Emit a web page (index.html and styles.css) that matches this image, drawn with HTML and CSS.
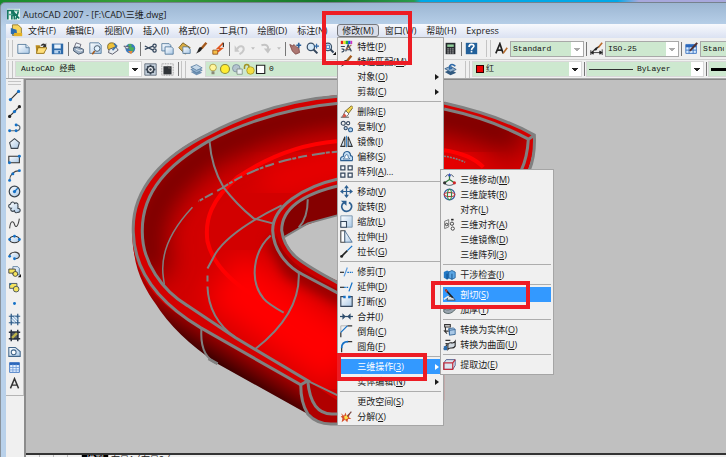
FILE: index.html
```html
<!DOCTYPE html>
<html lang="zh-CN">
<head>
<meta charset="utf-8">
<title>AutoCAD 2007</title>
<link rel="stylesheet" href="styles.css">
</head>
<body>
<svg class="defs" aria-hidden="true">
  <defs>
    <linearGradient id="sheet" x1="0" y1="0" x2="1" y2="1"><stop offset="0" stop-color="#fff"/><stop offset="1" stop-color="#a9c8e6"/></linearGradient>
    <symbol id="new" viewBox="0 0 16 16"><path d="M1 3h10l4 4v7H1z" fill="url(#sheet)" stroke="#4b7296"/><path d="M11 3v4h4" fill="#dceaf6" stroke="#4b7296"/></symbol>
    <symbol id="open" viewBox="0 0 16 16"><path d="M2 4h5l1 2h5v8H3z" fill="#b98a1c"/><path d="M5 7h11l-4 7H3z" fill="#ffdf7a" stroke="#8c6a14"/><path d="M8 5c1-3 4-4 6-2l1-2v5h-4l1-2" fill="#333"/></symbol>
    <symbol id="save" viewBox="0 0 16 16"><path d="M1 2h14v13H1z" fill="#2d69a8"/><path d="M4 3h8v5H4z" fill="#e8f3fc"/><path d="M4 10h8v4H4z" fill="#b7d3ee"/><path d="M9 11h2v3H9z" fill="#2d69a8"/></symbol>
    <symbol id="print" viewBox="0 0 16 16"><path d="M5 1l6 2-2 5-6-2z" fill="#eef4fa" stroke="#556"/><path d="M2 7l5-1 7 3v4l-6 2-6-4z" fill="#9eb0c4" stroke="#34465c"/><path d="M5 9l5 2 3-1" fill="none" stroke="#fff"/></symbol>
    <symbol id="preview" viewBox="0 0 16 16"><path d="M1 1h11l3 3v10H1z" fill="url(#sheet)" stroke="#4b7296"/><circle cx="10" cy="8" r="3.5" fill="#e2f2ff" stroke="#345"/><path d="M7 11l-3 4" stroke="#a4591c" stroke-width="2"/></symbol>
    <symbol id="publish" viewBox="0 0 16 16"><circle cx="7" cy="6" r="5" fill="#efc23a" stroke="#6b5a22"/><path d="M4 9l8-3 3 4-7 5-5-2z" fill="#e8edf2" stroke="#445"/><path d="M10 2l3 3-5 5" fill="none" stroke="#3f72a5" stroke-width="2"/></symbol>
    <symbol id="globe" viewBox="0 0 16 16"><circle cx="9" cy="8" r="6" fill="#3979bf"/><path d="M7 2l4 1-1 3 4 1-2 5-3-2-3-3z" fill="#4bb05a"/><path d="M1 5l7 1-3 3z" fill="#d8dde6" stroke="#556"/><path d="M6 11l4 4 2-4z" fill="#e9893b"/></symbol>
    <symbol id="cut" viewBox="0 0 16 16"><path d="M1 5l10 5M1 9l10-4" stroke="#34465c" stroke-width="1.5"/><circle cx="13" cy="4.500" r="2" fill="none" stroke="#34465c" stroke-width="1.500"/><circle cx="13" cy="10.500" r="2" fill="none" stroke="#34465c" stroke-width="1.500"/></symbol>
    <symbol id="copy" viewBox="0 0 16 16"><path d="M1 2h9l2 2v7H1z" fill="url(#sheet)" stroke="#4b7296"/><path d="M5 6h8l2 2v7H5z" fill="url(#sheet)" stroke="#4b7296"/></symbol>
    <symbol id="paste" viewBox="0 0 16 16"><path d="M1 7l5-6 9 6-6 8z" fill="#d9ad45" stroke="#705514"/><path d="M6 6h6l3 3v5H6z" fill="url(#sheet)" stroke="#4b7296"/></symbol>
    <symbol id="brush" viewBox="0 0 16 16"><path d="M14 1l-6 7" stroke="#a4591c" stroke-width="3"/><path d="M9 7c-1 5-5 6-8 7 3-2 2-5 5-8z" fill="#222"/></symbol>
    <symbol id="editor" viewBox="0 0 16 16"><path d="M1 10h6v5H1z" fill="#f6c04a" stroke="#8a4a10"/><path d="M14 1L7 8h5l-5 4" fill="none" stroke="#e2571e" stroke-width="2"/><path d="M14 1v5" stroke="#333" stroke-width="1.500"/></symbol>
    <symbol id="undo" viewBox="0 0 16 16"><path d="M5 9c3-6 9-4 8 1-1 3-3 4-5 5" fill="none" stroke="#c8c8c8" stroke-width="2.500"/><path d="M2 4v8h6z" fill="#c8c8c8"/></symbol>
    <symbol id="redo" viewBox="0 0 16 16"><path d="M3 4c7-2 9 2 8 5" fill="none" stroke="#c4c4c4" stroke-width="2.500"/><path d="M6 8h9l-4 6z" fill="#c4c4c4"/></symbol>
    <symbol id="tiny" viewBox="0 0 6 16"><path d="M0 6h6l-3 4z" fill="#c0c0c0"/></symbol>
    <symbol id="pan" viewBox="0 0 16 16"><path d="M1 3l4 2 1-2 3 3 3 1 1 6-5 2-4-4z" fill="#ad7772" stroke="#7c4844"/><path d="M12 1v6M9 4h6" stroke="#285f99" stroke-width="2"/></symbol>
    <symbol id="zoomin" viewBox="0 0 16 16"><circle cx="6" cy="6" r="4.500" fill="#d7ebfa" stroke="#3a5068" stroke-width="1.500"/><path d="M9 9l5 5" stroke="#34465c" stroke-width="2.500"/><path d="M13 2v6M10 5h6" stroke="#2d69a8" stroke-width="1.500"/></symbol>
    <symbol id="zoomwin" viewBox="0 0 16 16"><circle cx="6" cy="6" r="4.500" fill="#d7ebfa" stroke="#3a5068" stroke-width="1.500"/><path d="M9 9l4 4" stroke="#34465c" stroke-width="2.500"/><path d="M4 4h4v4H4z" fill="none" stroke="#2d69a8"/><path d="M12 16l4-4v4z" fill="#111"/></symbol>
    <symbol id="calc" viewBox="0 0 16 16"><path d="M2 1h12v14H2z" fill="#25282c"/><path d="M4 3h8v3H4z" fill="#91cf9b"/><path d="M4 8.500h8M4 11h8M4 13.500h8" stroke="#ddd" stroke-dasharray="2 1"/></symbol>
    <symbol id="help" viewBox="0 0 16 16"><path d="M1 1h14v14H1z" fill="#22609a"/><path d="M5 6c0-4 6-4 6-1 0 2-3 2-3 5M8 11v2" stroke="#fff" stroke-width="2" fill="none"/></symbol>
    <symbol id="tstyle" viewBox="0 0 16 16"><path d="M1 14L6 2l4 12M3 10h6" fill="none" stroke="#222" stroke-width="2"/><path d="M15 7l-5 7" stroke="#b86b29" stroke-width="2"/></symbol>
    <symbol id="dstyle" viewBox="0 0 16 16"><path d="M1 10v6M15 9v7M1 13h14M1 13l3-2v4zM15 13l-3-2v4z" fill="#222" stroke="#222"/><path d="M15 1l-5 6" stroke="#b86b29" stroke-width="2"/><path d="M11 5l-3 5-5 1 4-4z" fill="#222"/></symbol>
    <symbol id="tbstyle" viewBox="0 0 16 16"><path d="M1 3h13v11H1z" fill="#d9ecff" stroke="#2b67bb"/><path d="M1 5h13" stroke="#2b67bb" stroke-width="3"/><path d="M1 10h13M5 3v11M10 3v11" stroke="#2b67bb"/><path d="M15 1L6 11" stroke="#533" stroke-width="2.500"/></symbol>
    <symbol id="gear" viewBox="0 0 16 16"><path d="M1 1h14v14H1z" fill="#c7d3df" stroke="#52606f"/><circle cx="8" cy="8" r="4" fill="#fff" stroke="#3a4654" stroke-width="2"/><circle cx="8" cy="8" r="1.500" fill="#3a4654"/><path d="M8 2v2M8 12v2M2 8h2M12 8h2M4 4l1 1M11 11l1 1M4 12l1-1M11 5l1-1" stroke="#3a4654" stroke-width="2"/></symbol>
    <symbol id="mine" viewBox="0 0 16 16"><path d="M1 1h14v14H1z" fill="none" stroke="#777" stroke-dasharray="1 1"/><path d="M3 4h10v10H3z" fill="#303438"/><path d="M8 3l5 4h-4z" fill="#555"/></symbol>
    <symbol id="layers" viewBox="0 0 16 16"><path d="M1 11l7 4 7-3-7-4z" fill="#6f91b3"/><path d="M1 8l7 4 7-3-7-4z" fill="#93b2cf" stroke="#587ca0"/><path d="M1 5l7 4 7-3-7-4z" fill="#c6d9ea" stroke="#587ca0"/></symbol>
    <symbol id="lprev" viewBox="0 0 16 16"><path d="M1 11l7 4 7-3-7-4z" fill="#31597f"/><path d="M1 7l7 4 7-3-7-4z" fill="#93b2cf" stroke="#31597f"/><path d="M14 4c-4-4-8-2-7 3l3-1" fill="none" stroke="#2d69a8" stroke-width="2"/></symbol>
    <symbol id="bulb" viewBox="0 0 16 16"><circle cx="8" cy="6" r="4.500" fill="#fff59b" stroke="#a19136"/><path d="M6 11h4v4H6z" fill="#8a8a78"/></symbol>
    <symbol id="sun" viewBox="0 0 16 16"><circle cx="8" cy="8" r="6" fill="#ffed31" stroke="#8f8c38" stroke-width="1.500"/></symbol>
    <symbol id="vp" viewBox="0 0 16 16"><circle cx="7" cy="7" r="5" fill="#b4c4cf" stroke="#76879a"/><path d="M8 8h7v7H8z" fill="#e9f1f4" stroke="#76877a"/></symbol>
    <symbol id="lock" viewBox="0 0 16 16"><path d="M2 8V5c0-4 6-4 6 0v3" fill="none" stroke="#a09325" stroke-width="2"/><circle cx="10" cy="10" r="5" fill="#f5df43" stroke="#a09325"/></symbol>
    <symbol id="white" viewBox="0 0 16 16"><path d="M2 3h11v11H2z" fill="#fff" stroke="#222" stroke-width="1.500"/></symbol>
    <symbol id="line" viewBox="0 0 16 16"><path d="M3 13L13 3" stroke="#333" stroke-width="1.500"/><circle cx="3" cy="13" r="2" fill="#1471c7"/><circle cx="13" cy="3" r="2" fill="#1471c7"/></symbol>
    <symbol id="xline" viewBox="0 0 16 16"><path d="M1 15L15 1" stroke="#333" stroke-width="1.500"/><circle cx="2" cy="14" r="2" fill="#222"/><circle cx="14" cy="2" r="2" fill="#222"/><circle cx="8" cy="8" r="2" fill="#1471c7"/></symbol>
    <symbol id="pline" viewBox="0 0 16 16"><path d="M2 12h8c6 0 6-7 1-7" fill="none" stroke="#5b6873" stroke-width="1.500"/><circle cx="2" cy="12" r="1.800" fill="#1471c7"/><circle cx="10" cy="12" r="1.800" fill="#1471c7"/><circle cx="10" cy="5" r="1.800" fill="#1471c7"/></symbol>
    <symbol id="poly" viewBox="0 0 16 16"><path d="M8 2l6 5-2 7H4L2 7z" fill="url(#sheet)" stroke="#3c4650" stroke-width="1.300"/></symbol>
    <symbol id="rect" viewBox="0 0 16 16"><path d="M1 4h13v8H1z" fill="url(#sheet)" stroke="#333" stroke-width="1.300"/><circle cx="1.800" cy="12" r="1.800" fill="#1471c7"/><circle cx="14" cy="4" r="1.800" fill="#1471c7"/></symbol>
    <symbol id="arc" viewBox="0 0 16 16"><path d="M2 14C2 7 7 2 14 2" fill="none" stroke="#444" stroke-width="1.300"/><circle cx="2" cy="14" r="1.800" fill="#1471c7"/><circle cx="6" cy="6" r="1.800" fill="#1471c7"/><circle cx="14" cy="2" r="1.800" fill="#1471c7"/></symbol>
    <symbol id="circle" viewBox="0 0 16 16"><circle cx="8" cy="8" r="6.500" fill="url(#sheet)" stroke="#3c4650" stroke-width="1.500"/><path d="M8 8l4-4" stroke="#1471c7" stroke-width="1.500"/><circle cx="8" cy="8" r="2" fill="#1471c7"/></symbol>
    <symbol id="cloud" viewBox="0 0 16 16"><path d="M4 2c2-2 4 0 4 1 3-2 5 1 4 3 1 1 0 2 0 3 4 0 4 5 0 5-2 1-4 0-4-2-3 2-6-1-4-3-4 0-4-5-1-5z" fill="url(#sheet)" stroke="#3c4650" stroke-width="1.300"/></symbol>
    <symbol id="spline" viewBox="0 0 16 16"><path d="M2 14C3 3 7 5 8 9s4 5 6-7" fill="none" stroke="#444" stroke-width="1.300"/></symbol>
    <symbol id="ellipse" viewBox="0 0 16 16"><ellipse cx="8" cy="8" rx="6" ry="4" fill="url(#sheet)" stroke="#333" stroke-width="1.500"/><circle cx="2" cy="8" r="1.700" fill="#1471c7"/><circle cx="14" cy="8" r="1.700" fill="#1471c7"/><circle cx="8" cy="4" r="1.700" fill="#1471c7"/></symbol>
    <symbol id="earc" viewBox="0 0 16 16"><path d="M2 9C1 3 14 2 14 8c0 2-2 4-5 4" fill="url(#sheet)" stroke="#444" stroke-width="1.500"/><circle cx="2" cy="9" r="1.700" fill="#1471c7"/><circle cx="8" cy="12" r="1.700" fill="#1471c7"/></symbol>
    <symbol id="block" viewBox="0 0 16 16"><path d="M6 2h6l2 2v8H6z" fill="url(#sheet)" stroke="#4b7296"/><path d="M1 5h8v5H1z" fill="#f4e35f" stroke="#333"/><circle cx="9" cy="11" r="3" fill="#f4e35f" stroke="#333"/><path d="M12 15l4-4v4z" fill="#111"/></symbol>
    <symbol id="mkblock" viewBox="0 0 16 16"><path d="M2 3h9v6H2z" fill="#f4e35f" stroke="#34465c"/><circle cx="10" cy="10" r="3.500" fill="#f4e35f" stroke="#34465c"/><path d="M2 3h2v2H2z" fill="#1471c7"/></symbol>
    <symbol id="point" viewBox="0 0 16 16"><circle cx="8" cy="8" r="1.800" fill="#1471c7"/></symbol>
    <symbol id="hatch" viewBox="0 0 16 16"><path d="M3 3h10v10H3z" fill="#a9c6e1"/><path d="M4 1v14M12 1v14M1 4h14M1 12h14" stroke="#2f5b86" stroke-width="1.500"/><path d="M4 8l4 4M5 5l6 6M8 4l4 4" stroke="#fff"/></symbol>
    <symbol id="grad" viewBox="0 0 16 16"><path d="M3 3h10v10H3z" fill="#52575c"/><path d="M4 1v14M12 1v14M1 4h14M1 12h14" stroke="#28313f" stroke-width="1.800"/><path d="M5 11l6-6" stroke="#bdb24a" stroke-width="3"/></symbol>
    <symbol id="region" viewBox="0 0 16 16"><path d="M1 3h8l6 5v6H1z" fill="url(#sheet)" stroke="#42668a" stroke-width="1.300"/><circle cx="7" cy="9" r="3" fill="#fff" stroke="#42668a" stroke-width="1.300"/></symbol>
    <symbol id="table" viewBox="0 0 16 16"><path d="M2 2h12v12H2z" fill="#e6f1ff" stroke="#2b67bb"/><path d="M2 3.500h12" stroke="#2b67bb" stroke-width="3"/><path d="M2 8h12M2 11h12M6 4v10M10 4v10" stroke="#6c9bd9"/></symbol>
    <symbol id="mtext" viewBox="0 0 16 16"><path d="M3 14L8 2l5 12M5 10h6" fill="none" stroke="#333" stroke-width="1.800"/></symbol>
    <symbol id="props" viewBox="0 0 16 16"><path d="M1 1h3v4H1z" fill="#e02020"/><path d="M4 1h3v4H4z" fill="#f0e020"/><path d="M7 1h3v4H7z" fill="#20b040"/><path d="M10 1h3v4h-3z" fill="#2050e0"/><path d="M13 1h2v4h-2z" fill="#d030c0"/><path d="M1 8h5M2 11c4 0 4 3 0 4M7 14l3-8 4 8M8 12h5" stroke="#34465c" stroke-width="1.500" fill="none"/><path d="M14 6l-7 6" stroke="#a06a50" stroke-width="1.500"/></symbol>
    <symbol id="erase" viewBox="0 0 16 16"><path d="M1 15h10" stroke="#333"/><path d="M14 1l2 2-6 8-4-3z" fill="#f3d750" stroke="#6b5a22"/><path d="M7 7l4 4-3 3-5 0z" fill="#fff" stroke="#555"/><path d="M5 10l3 3-2 2H3z" fill="#d55a4a"/></symbol>
    <symbol id="copies" viewBox="0 0 16 16"><circle cx="4" cy="4" r="2.500" fill="#eee" stroke="#34465c" stroke-width="1.300"/><circle cx="10" cy="4" r="2" fill="#fff" stroke="#34465c" stroke-width="1.300"/><circle cx="7" cy="10" r="2" fill="#b7d3ee" stroke="#34465c" stroke-width="1.300"/><circle cx="13" cy="12" r="2.500" fill="#b7d3ee" stroke="#2d5f91" stroke-width="1.300"/></symbol>
    <symbol id="mirror" viewBox="0 0 16 16"><path d="M6 2v12H1zM10 2v12h5z" fill="url(#sheet)" stroke="#333" stroke-width="1.300"/><path d="M8 1v14" stroke="#1471c7"/></symbol>
    <symbol id="offset" viewBox="0 0 16 16"><path d="M1 13c-1-4 1-5 3-5 0-8 9-8 9-1 3 0 3 4 2 6z" fill="#c4def5" stroke="#2d5f91" stroke-width="1.400"/><path d="M4 11c1-1 2-1 2-3 1-3 4-3 4 0 0 2 2 2 2 3z" fill="#fff" stroke="#2d5f91"/></symbol>
    <symbol id="array" viewBox="0 0 16 16"><path d="M1 1h5v5H1zM10 1h5v5h-5zM1 10h5v5H1zM10 10h5v5h-5z" fill="#f6f9fc" stroke="#34465c" stroke-width="1.500"/></symbol>
    <symbol id="move" viewBox="0 0 16 16"><path d="M8 2v12M2 8h12" stroke="#2d5f91" stroke-width="1.500"/><path d="M8 0l3 4H5zM8 16l3-4H5zM0 8l4-3v6zM16 8l-4-3v6z" fill="#2d5f91"/></symbol>
    <symbol id="rotate" viewBox="0 0 16 16"><path d="M5 3C0 6 2 14 8 14s9-8 3-11" fill="none" stroke="#2d5f91" stroke-width="2"/><path d="M1 1h7v6z" fill="#2d5f91"/></symbol>
    <symbol id="scale" viewBox="0 0 16 16"><path d="M1 1h14v14H1z" fill="url(#sheet)" stroke="#6d8aa5"/><path d="M1 8h7v7H1z" fill="#eef5fb" stroke="#34465c" stroke-width="1.300"/></symbol>
    <symbol id="stretch" viewBox="0 0 16 16"><path d="M1 1h5v14H1z" fill="#fff" stroke="#444" stroke-width="1.300"/><path d="M6 15V1l9 14z" fill="url(#sheet)" stroke="#42668a"/></symbol>
    <symbol id="lengthen" viewBox="0 0 16 16"><path d="M2 14l7-7" stroke="#222" stroke-width="2"/><path d="M9 7l6-6" stroke="#1471c7" stroke-width="1.500"/><circle cx="2" cy="14" r="1.800" fill="#222"/></symbol>
    <symbol id="trim" viewBox="0 0 16 16"><path d="M0 9h5" stroke="#333" stroke-width="1.500"/><path d="M9 9h7" stroke="#1471c7" stroke-width="1.500" stroke-dasharray="2 1"/><path d="M5 14l4-11" stroke="#5a9be0" stroke-width="1.500"/></symbol>
    <symbol id="extend" viewBox="0 0 16 16"><path d="M0 9h5" stroke="#333" stroke-width="1.500"/><path d="M5 9h6" stroke="#1471c7" stroke-width="1.500" stroke-dasharray="2 1"/><path d="M11 14l4-11" stroke="#1471c7" stroke-width="1.500"/></symbol>
    <symbol id="break" viewBox="0 0 16 16"><path d="M5 2H1v12h14V2h-4" fill="url(#sheet)" stroke="#34465c" stroke-width="1.400"/><path d="M4 1h3v3H4zM10 1h3v3h-3z" fill="#1471c7"/></symbol>
    <symbol id="join" viewBox="0 0 16 16"><path d="M0 8h16" stroke="#2d4c6c" stroke-width="1.500"/><path d="M7 8L3 4v8zM9 8l4-4v8z" fill="#2d4c6c"/></symbol>
    <symbol id="chamfer" viewBox="0 0 16 16"><path d="M1 15V9M9 1h6" stroke="#333" stroke-width="1.500"/><path d="M1 9V1h8" fill="none" stroke="#aaa"/><path d="M1 9l8-8" stroke="#1471c7" stroke-width="1.500"/></symbol>
    <symbol id="fillet" viewBox="0 0 16 16"><path d="M2 15V9M9 2h6" stroke="#333" stroke-width="1.500"/><path d="M2 10c0-5 3-8 8-8" fill="none" stroke="#1471c7" stroke-width="2"/></symbol>
    <symbol id="explode" viewBox="0 0 16 16"><path d="M1 4l4 3 2-4 1 4 4-3-1 5 3 2-4 0-1 4-3-3-4 3 1-5-2-2 2-1z" fill="#d8502b"/><path d="M5 8l4-2 1 4-4 2z" fill="#fbe04a"/><path d="M14 2l-5 6" stroke="#7c4844" stroke-width="1.500"/></symbol>
    <symbol id="move3" viewBox="0 0 16 16"><path d="M8 8V2M8 8l-6 4M8 8l6 4" stroke="#2b7a3a" stroke-width="1.500"/><path d="M3 5c1-2 2-3 4-3M13 5c-1-2-2-3-4-3M2 13c4 3 8 3 12 0" fill="none" stroke="#345"/><path d="M8 0l2 4H6z" fill="#2d4cc0"/><circle cx="2" cy="12" r="2" fill="#333"/><circle cx="14" cy="12" r="2" fill="#d02828"/></symbol>
    <symbol id="rot3" viewBox="0 0 16 16"><circle cx="8" cy="8" r="6.500" fill="none" stroke="#3b5fa0" stroke-width="1.500"/><ellipse cx="8" cy="8" rx="6.500" ry="2.500" fill="none" stroke="#c93838" stroke-width="1.300"/><ellipse cx="8" cy="8" rx="2.500" ry="6.500" fill="none" stroke="#318a4a" stroke-width="1.300"/></symbol>
    <symbol id="align3" viewBox="0 0 16 16"><path d="M2 4l5-2v9l-5 2z" fill="#eee" stroke="#666"/><circle cx="4.500" cy="8" r="1.500" fill="none" stroke="#222"/><circle cx="11" cy="7" r="2" fill="none" stroke="#222"/><circle cx="12" cy="13" r="2" fill="#fff" stroke="#222"/><path d="M10 2h3" stroke="#222" stroke-width="2"/></symbol>
    <symbol id="interfere" viewBox="0 0 16 16"><path d="M1 5l4-2 4 2v7l-4 2-4-2z" fill="#2279c6"/><path d="M7 5l4-2 4 2v7l-4 2-4-2z" fill="#5ba7e5" stroke="#1b5d9a"/><path d="M5 7v7M11 7v7" stroke="#0f4379"/></symbol>
    <symbol id="slice" viewBox="0 0 16 16"><path d="M6 10l6 1 3 4H5z" fill="#d9e2ea" stroke="#345"/><path d="M3 2l9 10" stroke="#222" stroke-width="2"/><path d="M2 1l4 2-2 3z" fill="#c44532"/><path d="M1 14l6-4" stroke="#eee" stroke-width="2"/></symbol>
    <symbol id="thicken" viewBox="0 0 16 16"><path d="M1 7c5 3 9 1 14-3v4c-5 6-10 6-14 3z" fill="#9aa5af" stroke="#455"/></symbol>
    <symbol id="solid" viewBox="0 0 16 16"><path d="M7 7l6-1 2 2v6l-7 1z" fill="#a9c8e6" stroke="#2d5f91"/><path d="M7 7l1 2 7-1M8 9v6" fill="none" stroke="#2d5f91"/><path d="M2 2h7v3H2zM3 5v5h4M1 9l4 4" fill="#eee" stroke="#333" stroke-width="1.300"/></symbol>
    <symbol id="surface" viewBox="0 0 16 16"><path d="M6 8c3-5 6 1 9-4v6c-3 5-6 0-9 4z" fill="#d0d8df" stroke="#222" stroke-width="1.300"/><path d="M3 3h6M3 7h3M1 14l4-6" stroke="#333" stroke-width="1.500"/><path d="M1 10h4v5H1z" fill="#2c6cad"/></symbol>
    <symbol id="edges" viewBox="0 0 16 16"><path d="M1 6l3-4h11v7l-3 5H1z" fill="#dbe5f0" stroke="#3a4a80"/><path d="M1 6h11v8H1zM12 6l3-4" fill="none" stroke="#c22c3c" stroke-width="1.500"/></symbol>
    <symbol id="doc" viewBox="0 0 16 16"><path d="M3 1h7l4 4v9H3z" fill="#f8d55d" stroke="#7c6a2a"/><path d="M1 5l7 2 1 7-8-2z" fill="#2c6cad"/><path d="M5 11h10v4H5z" fill="#e5b125"/></symbol>
    <symbol id="app" viewBox="0 0 16 16"><path d="M0 1h16v14H0z" fill="#e8f5f0"/><path d="M1 14V3h5v11M8 2v8M11 14l3-10M9 14V6l6 7" fill="none" stroke="#167761" stroke-width="2"/><path d="M1 8h6M9 3h6" stroke="#4ca48d" stroke-width="2"/></symbol>
    <symbol id="first" viewBox="0 0 16 16"><path d="M4 3v10" stroke="#222" stroke-width="1.500"/><path d="M12 3v10L6 8z" fill="#222"/></symbol>
    <symbol id="prev" viewBox="0 0 16 16"><path d="M11 3v10L5 8z" fill="#222"/></symbol>
    <symbol id="next" viewBox="0 0 16 16"><path d="M5 3v10l6-5z" fill="#222"/></symbol>
    <symbol id="last" viewBox="0 0 16 16"><path d="M12 3v10" stroke="#222" stroke-width="1.500"/><path d="M4 3v10l6-5z" fill="#222"/></symbol>
  </defs>
</svg>

<div class="desktop">
<div class="window">
  <header class="titlebar"><svg class="icon"><use href="#app"/></svg><h1>AutoCAD 2007 - [F:\CAD\三维.dwg]</h1></header>

  <nav class="menubar" aria-label="菜单">
    <svg class="icon"><use href="#doc"/></svg>
    <button>文件(F)</button><button>编辑(E)</button><button>视图(V)</button><button>插入(I)</button><button>格式(O)</button><button>工具(T)</button><button>绘图(D)</button><button>标注(N)</button>
    <div class="dropdown">
      <button class="open">修改(M)</button>
      <div class="menu" role="menu">
        <button class="item" role="menuitem"><svg class="icon"><use href="#props"/></svg><span>特性(<u>P</u>)</span></button>
        <button class="item" role="menuitem"><svg class="icon"><use href="#brush"/></svg><span>特性匹配(<u>M</u>)</span></button>
        <button class="item more" role="menuitem"><span>对象(<u>O</u>)</span></button>
        <button class="item more" role="menuitem"><span>剪裁(<u>C</u>)</span></button>
        <hr>
        <button class="item" role="menuitem"><svg class="icon"><use href="#erase"/></svg><span>删除(<u>E</u>)</span></button>
        <button class="item" role="menuitem"><svg class="icon"><use href="#copies"/></svg><span>复制(<u>Y</u>)</span></button>
        <button class="item" role="menuitem"><svg class="icon"><use href="#mirror"/></svg><span>镜像(<u>I</u>)</span></button>
        <button class="item" role="menuitem"><svg class="icon"><use href="#offset"/></svg><span>偏移(<u>S</u>)</span></button>
        <button class="item" role="menuitem"><svg class="icon"><use href="#array"/></svg><span>阵列(<u>A</u>)...</span></button>
        <hr>
        <button class="item" role="menuitem"><svg class="icon"><use href="#move"/></svg><span>移动(<u>V</u>)</span></button>
        <button class="item" role="menuitem"><svg class="icon"><use href="#rotate"/></svg><span>旋转(<u>R</u>)</span></button>
        <button class="item" role="menuitem"><svg class="icon"><use href="#scale"/></svg><span>缩放(<u>L</u>)</span></button>
        <button class="item" role="menuitem"><svg class="icon"><use href="#stretch"/></svg><span>拉伸(<u>H</u>)</span></button>
        <button class="item" role="menuitem"><svg class="icon"><use href="#lengthen"/></svg><span>拉长(<u>G</u>)</span></button>
        <hr>
        <button class="item" role="menuitem"><svg class="icon"><use href="#trim"/></svg><span>修剪(<u>T</u>)</span></button>
        <button class="item" role="menuitem"><svg class="icon"><use href="#extend"/></svg><span>延伸(<u>D</u>)</span></button>
        <button class="item" role="menuitem"><svg class="icon"><use href="#break"/></svg><span>打断(<u>K</u>)</span></button>
        <button class="item" role="menuitem"><svg class="icon"><use href="#join"/></svg><span>合并(<u>J</u>)</span></button>
        <button class="item" role="menuitem"><svg class="icon"><use href="#chamfer"/></svg><span>倒角(<u>C</u>)</span></button>
        <button class="item" role="menuitem"><svg class="icon"><use href="#fillet"/></svg><span>圆角(<u>F</u>)</span></button>
        <hr>
        <div class="dropdown">
          <button class="item more active" role="menuitem"><span>三维操作(<u>3</u>)</span></button>
          <div class="menu submenu" role="menu">
            <button class="item" role="menuitem"><svg class="icon"><use href="#move3"/></svg><span>三维移动(<u>M</u>)</span></button>
            <button class="item" role="menuitem"><svg class="icon"><use href="#rot3"/></svg><span>三维旋转(<u>R</u>)</span></button>
            <button class="item" role="menuitem"><span>对齐(<u>L</u>)</span></button>
            <button class="item" role="menuitem"><svg class="icon"><use href="#align3"/></svg><span>三维对齐(<u>A</u>)</span></button>
            <button class="item" role="menuitem"><span>三维镜像(<u>D</u>)</span></button>
            <button class="item" role="menuitem"><span>三维阵列(<u>3</u>)</span></button>
            <hr>
            <button class="item" role="menuitem"><svg class="icon"><use href="#interfere"/></svg><span>干涉检查(<u>I</u>)</span></button>
            <hr>
            <div class="dropdown">
              <button class="item active" role="menuitem"><svg class="icon"><use href="#slice"/></svg><span>剖切(<u>S</u>)</span></button>
              <div class="callout callout-slice"></div>
            </div>
            <button class="item" role="menuitem"><svg class="icon"><use href="#thicken"/></svg><span>加厚(<u>T</u>)</span></button>
            <hr>
            <button class="item" role="menuitem"><svg class="icon"><use href="#solid"/></svg><span>转换为实体(<u>O</u>)</span></button>
            <button class="item" role="menuitem"><svg class="icon"><use href="#surface"/></svg><span>转换为曲面(<u>U</u>)</span></button>
            <hr>
            <button class="item" role="menuitem"><svg class="icon"><use href="#edges"/></svg><span>提取边(<u>E</u>)</span></button>
          </div>
          <div class="callout callout-3d"></div>
        </div>
        <button class="item more" role="menuitem"><span>实体编辑(<u>N</u>)</span></button>
        <hr>
        <button class="item" role="menuitem"><span>更改空间(<u>S</u>)</span></button>
        <button class="item" role="menuitem"><svg class="icon"><use href="#explode"/></svg><span>分解(<u>X</u>)</span></button>
      </div>
      <div class="callout callout-modify"></div>
    </div>
    <button>窗口(W)</button><button>帮助(H)</button><button>Express</button>
  </nav>

  <div class="toolbar">
    <i class="grip"></i>
    <button class="tool" aria-label="新建"><svg class="icon"><use href="#new"/></svg></button>
    <button class="tool" aria-label="打开"><svg class="icon"><use href="#open"/></svg></button>
    <button class="tool" aria-label="保存"><svg class="icon"><use href="#save"/></svg></button>
    <i class="sep"></i>
    <button class="tool" aria-label="打印"><svg class="icon"><use href="#print"/></svg></button>
    <button class="tool" aria-label="打印预览"><svg class="icon"><use href="#preview"/></svg></button>
    <button class="tool" aria-label="发布"><svg class="icon"><use href="#publish"/></svg></button>
    <button class="tool" aria-label="三维DWF"><svg class="icon"><use href="#globe"/></svg></button>
    <i class="sep"></i>
    <button class="tool" aria-label="剪切"><svg class="icon"><use href="#cut"/></svg></button>
    <button class="tool" aria-label="复制"><svg class="icon"><use href="#copy"/></svg></button>
    <button class="tool" aria-label="粘贴"><svg class="icon"><use href="#paste"/></svg></button>
    <button class="tool" aria-label="特性匹配"><svg class="icon"><use href="#brush"/></svg></button>
    <button class="tool" aria-label="块编辑器"><svg class="icon"><use href="#editor"/></svg></button>
    <i class="sep"></i>
    <button class="tool" aria-label="放弃"><svg class="icon"><use href="#undo"/></svg></button>
    <button class="tool narrow" aria-label="放弃列表"><svg class="tiny"><use href="#tiny"/></svg></button>
    <button class="tool" aria-label="重做"><svg class="icon"><use href="#redo"/></svg></button>
    <button class="tool narrow" aria-label="重做列表"><svg class="tiny"><use href="#tiny"/></svg></button>
    <i class="sep"></i>
    <button class="tool" aria-label="平移"><svg class="icon"><use href="#pan"/></svg></button>
    <button class="tool" aria-label="实时缩放"><svg class="icon"><use href="#zoomin"/></svg></button>
    <button class="tool" aria-label="窗口缩放"><svg class="icon"><use href="#zoomwin"/></svg></button>
    <span class="fill"></span>
    <button class="tool" aria-label="计算器"><svg class="icon"><use href="#calc"/></svg></button>
    <i class="sep"></i>
    <button class="tool" aria-label="帮助"><svg class="icon"><use href="#help"/></svg></button>
    <i class="grip wide"></i>
    <button class="tool" aria-label="文字样式"><svg class="icon"><use href="#tstyle"/></svg></button>
    <div class="combo style dim"><select aria-label="文字样式名"><option>Standard</option></select></div>
    <i class="sep"></i>
    <button class="tool" aria-label="标注样式"><svg class="icon"><use href="#dstyle"/></svg></button>
    <div class="combo style dim"><select aria-label="标注样式名"><option>ISO-25</option></select></div>
    <i class="sep"></i>
    <button class="tool" aria-label="表格样式"><svg class="icon"><use href="#tbstyle"/></svg></button>
    <div class="combo cut dim"><select aria-label="表格样式名"><option>Standard</option></select></div>
  </div>

  <div class="toolbar second">
    <i class="grip"></i>
    <div class="combo space"><select aria-label="工作空间"><option>AutoCAD 经典</option></select></div>
    <button class="tool" aria-label="工作空间设置"><svg class="icon"><use href="#gear"/></svg></button>
    <button class="tool" aria-label="我的工作空间"><svg class="icon"><use href="#mine"/></svg></button>
    <i class="sep"></i>
    <i class="grip"></i>
    <button class="tool" aria-label="图层特性"><svg class="icon"><use href="#layers"/></svg></button>
    <div class="combo layer"><svg class="mini"><use href="#bulb"/></svg><svg class="mini"><use href="#sun"/></svg><svg class="mini"><use href="#vp"/></svg><svg class="mini"><use href="#lock"/></svg><svg class="mini"><use href="#white"/></svg><select aria-label="图层"><option>0</option></select></div>
    <button class="tool" aria-label="上一个图层"><svg class="icon"><use href="#lprev"/></svg></button>
    <i class="grip wide"></i>
    <div class="combo color"><i class="swatch"></i><select aria-label="颜色"><option>红</option></select></div>
    <i class="sep"></i>
    <div class="combo ltype"><i class="stroke"></i><select aria-label="线型"><option>ByLayer</option></select></div>
    <i class="sep"></i>
    <div class="combo cut weight"><i class="stroke"></i></div>
  </div>

  <div class="workspace">
    <aside class="draw">
      <div class="palette">
      <i class="grip-h"></i>
      <button class="tool" aria-label="直线"><svg class="icon"><use href="#line"/></svg></button>
      <button class="tool" aria-label="构造线"><svg class="icon"><use href="#xline"/></svg></button>
      <button class="tool" aria-label="多段线"><svg class="icon"><use href="#pline"/></svg></button>
      <button class="tool" aria-label="正多边形"><svg class="icon"><use href="#poly"/></svg></button>
      <button class="tool" aria-label="矩形"><svg class="icon"><use href="#rect"/></svg></button>
      <button class="tool" aria-label="圆弧"><svg class="icon"><use href="#arc"/></svg></button>
      <button class="tool" aria-label="圆"><svg class="icon"><use href="#circle"/></svg></button>
      <button class="tool" aria-label="修订云线"><svg class="icon"><use href="#cloud"/></svg></button>
      <button class="tool" aria-label="样条曲线"><svg class="icon"><use href="#spline"/></svg></button>
      <button class="tool" aria-label="椭圆"><svg class="icon"><use href="#ellipse"/></svg></button>
      <button class="tool" aria-label="椭圆弧"><svg class="icon"><use href="#earc"/></svg></button>
      <button class="tool" aria-label="插入块"><svg class="icon"><use href="#block"/></svg></button>
      <button class="tool" aria-label="创建块"><svg class="icon"><use href="#mkblock"/></svg></button>
      <button class="tool" aria-label="点"><svg class="icon"><use href="#point"/></svg></button>
      <button class="tool" aria-label="图案填充"><svg class="icon"><use href="#hatch"/></svg></button>
      <button class="tool" aria-label="渐变色"><svg class="icon"><use href="#grad"/></svg></button>
      <button class="tool" aria-label="面域"><svg class="icon"><use href="#region"/></svg></button>
      <button class="tool" aria-label="表格"><svg class="icon"><use href="#table"/></svg></button>
      <button class="tool" aria-label="多行文字"><svg class="icon"><use href="#mtext"/></svg></button>
      </div>
    </aside>
    <main class="drawing">
      <svg class="model" viewBox="26 80 700 372" preserveAspectRatio="xMinYMin slice" role="img" aria-label="三维模型">
        <defs>
          <filter id="b16" x="-30%" y="-30%" width="160%" height="160%"><feGaussianBlur stdDeviation="13"/></filter>
          <filter id="b6" x="-30%" y="-30%" width="160%" height="160%"><feGaussianBlur stdDeviation="6"/></filter>
          <linearGradient id="side" gradientUnits="userSpaceOnUse" x1="250" y1="353" x2="234" y2="379"><stop offset="0" stop-color="#a80000"/><stop offset="1" stop-color="#260000"/></linearGradient>
          <clipPath id="inside"><path d="M142 232C141 190 170 160 208 140C250 118 295 107 336 103C380 99 420 103 443 108C475 114 510 128 527 138Q526 157 520 169L443 240V400H337V395L307 380L235 337L187 305C163 288 143 262 142 232Z"/></clipPath>
        </defs>
        <path d="M133 240C133 270 146 290 155 303Q175 335 217 363L307 413Q315 423 330 423H342V380L300 370L200 310Z" fill="url(#side)"/>
        <path d="M300 384L307 380H342V423H325Q300 415 300 384Z" fill="#b00000"/>
        <path d="M132 236C130 185 170 150 208 133C250 112 295 99 336 95C380 91 420 97 443 102Q500 116 533 135Q533 153 527 169L440 240V400H337L307 380L300 384L200 327C165 309 133 282 132 236Z" fill="#d40000"/>
        <g clip-path="url(#inside)">
          <path d="M120 80H540V400H120z" fill="#d20000"/>
          <path d="M158 275C135 235 150 190 208 150C260 124 310 112 350 110C410 108 460 115 520 140" fill="none" stroke="#720000" stroke-width="34" filter="url(#b16)"/>
          <path d="M222 276L262 305L345 362" fill="none" stroke="#ff0000" stroke-width="62" filter="url(#b16)"/>
          <path d="M264 185L345 160L480 165" fill="none" stroke="#ea0000" stroke-width="30" filter="url(#b16)"/>
          <path d="M272 238L290 270L345 300" fill="none" stroke="#900000" stroke-width="14" filter="url(#b6)"/>
          <path d="M336 141C300 144 265 158 237 177C211 199 204 219 207 241C212 263 230 283 265 302" fill="none" stroke="#ff0000" stroke-width="4"/>
          <path d="M443 150Q470 154 482 167" fill="none" stroke="#ff0000" stroke-width="4"/>
        </g>
        <path d="M340 182C300 190 275 207 276 228C276 252 295 268 340 290V214Z" fill="#c80000"/>
        <path d="M340 185C300 194 281 210 281 228L283 237L307 223L340 214Z" fill="#850000"/>
        <path d="M283 237Q300 224 340 214V282L313 269Q290 255 283 237Z" fill="#c0c0c0"/>
        <g fill="none" stroke="#808080" stroke-width="3">
          <path d="M340 96C295 99 250 112 208 134C165 155 131 187 133 232C134 272 160 303 200 327L300 384L307 380L235 337L187 305C162 290 142 262 142 232C141 190 170 163 208 141C250 119 295 107 340 103"/>
          <path d="M443 103Q500 116 533 135Q534 155 528 170M443 109Q490 119 527 139Q526 157 520 170M527 139L533 135"/>
          <path d="M300 384Q300 402 307 413Q316 423 330 423H340M307 380Q310 413 331 413H340"/>
          <path d="M340 178C300 187 272 207 272 230C273 253 290 268 302 274L340 294M340 185C300 194 281 210 281 230C284 252 295 260 340 284"/>
        </g>
        <g fill="none" stroke="#808080" stroke-width="1.500">
          <path d="M209 141Q211 167 223 187Q236 204 253 218L272 223M281 205Q230 230 215 253L207 268M207 275v6M207 286Q208 318 235 337M270 235C253 250 248 280 263 298Q267 303 283 312M298 272Q300 313 255 348M201 328Q199 356 217 363M307 199Q307 218 298 227M307 380L340 396M283 237L307 223L340 214" stroke-width="2"/>
          <path d="M208 358L217 363" stroke-width="3"/>
          <path d="M192 207Q158 243 163 277L164 284"/>
          <path d="M340 151Q265 158 223 187L198 201" stroke-width="2" stroke-dasharray="9 2 4 1 13 5"/>
          <path d="M443 156Q452 157 464 162" stroke-dasharray="2 1"/>
        </g>
      </svg>
    </main>
    <footer class="tabs">
      <button aria-label="首个"><svg class="mini"><use href="#first"/></svg></button>
      <button aria-label="上一个"><svg class="mini"><use href="#prev"/></svg></button>
      <button aria-label="下一个"><svg class="mini"><use href="#next"/></svg></button>
      <button aria-label="末个"><svg class="mini"><use href="#last"/></svg></button>
      <button class="current">模型</button><button class="layout">布局1</button><i>/</i><button class="layout">布局2</button><i>/</i>
    </footer>
  </div>
</div>
</div>
</body>
</html>
```
FILE: styles.css
```css
* { box-sizing: border-box; }

body {
  margin: 0;
  height: 100vh;
  overflow: hidden;
  font: 9px/12px "Open Sans", "Noto Sans CJK SC", sans-serif;
  color: #1a1a1a;
}

button {
  margin: 0;
  padding: 0;
  border: 0;
  background: none;
  font: inherit;
  color: inherit;
  white-space: nowrap;
}

.defs { position: absolute; width: 0; height: 0; }
.icon { display: block; flex: none; width: 13px; height: 13px; }
.tiny { display: block; width: 4px; height: 13px; }
.mini { display: block; flex: none; width: 12px; height: 12px; }

.desktop {
  height: 100vh;
  padding-top: 2px;
  background: linear-gradient(90deg, #188a2c, #3aa03a 20%, #14762a 45%, #2a9a4a 57%, #00a8e8 58%, #00a8e8 85%, #a8a8dc 88%);
}

.window {
  display: flex;
  flex-direction: column;
  height: calc(100vh + 6px);
  padding-left: 5px;
  border-top: 1px solid #76828e;
  border-left: 1px solid #8a939c;
  border-radius: 5px 0 0 0;
  background: linear-gradient(180deg, #9cb6d2, #b9d1ea 24px);
}

.titlebar {
  display: flex;
  align-items: center;
  gap: 3px;
  flex: none;
  height: 21px;
  padding: 2px 0 0 1px;
}
.titlebar h1 { margin: 0; font-size: 9px; font-weight: 400; }

.menubar {
  display: flex;
  align-items: stretch;
  flex: none;
  height: 14px;
  padding-left: 4px;
  background: linear-gradient(180deg, #f8f9fd, #dbe2f2);
}
.menubar > button, .menubar > .dropdown > .open { height: 13px; padding: 0 5px; line-height: 12px; }
.dropdown { position: relative; }
.menubar > .dropdown { margin: 0 1px 0 5px; }
.menubar > .dropdown > .open {
  padding: 0 4px;
  border: 1px solid #75777c;
  border-radius: 3px;
  background: #d9dde8;
  line-height: 11px;
}

.menu {
  position: absolute;
  z-index: 2;
  top: 13px;
  left: 0;
  width: 107px;
  padding: 1px 2px;
  border: 1px solid #a5a5a5;
  background: #f0f0f0;
}
.menu hr {
  height: 1px;
  margin: 2px 0;
  border: 0;
  background: #adadad;
}
.item {
  display: grid;
  grid-template-columns: 13px 1fr;
  align-items: center;
  column-gap: 4px;
  width: 100%;
  height: 15px;
  text-align: left;
}
.item span { grid-column: 2; line-height: 14px; }
.item u { text-underline-offset: 1px; }
.item.more { grid-template-columns: 13px 1fr 6px; }
.item.more::after {
  content: "";
  border: 3px solid transparent;
  border-left: 4px solid currentColor;
  border-right: 0;
}
.item.active { background: #3399ff; color: #fff; }
.submenu { top: -190px; left: 100px; width: 114px; padding: 2px; }

.callout {
  position: absolute;
  z-index: 3;
  border: 4px solid #ed1c24;
  pointer-events: none;
}
.callout-modify { top: -13px; left: -15px; width: 90px; height: 54px; }
.callout-3d { top: -6px; left: -3px; width: 90px; height: 28px; }
.callout-slice { top: -6px; left: -12px; width: 99px; height: 28px; }

.toolbar {
  display: flex;
  align-items: center;
  flex: none;
  height: 22px;
  padding-left: 1px;
  background: #f0f0f0;
  border-bottom: 1px solid #cfcfcf;
}
.toolbar.second { height: 19px; border-bottom-color: #aaa; }
.tool {
  display: flex;
  align-items: center;
  justify-content: center;
  flex: none;
  width: 17px;
  height: 16px;
}
.tool.narrow { width: 9px; }
.fill { flex: 1; }
.grip {
  flex: none;
  width: 5px;
  height: 17px;
  margin: 0 2px 0 1px;
  border: 1px solid #c4c4c4;
  border-width: 0 1px;
}
.grip.wide { margin-left: 6px; }
.sep { flex: none; width: 1px; height: 14px; margin: 0 1px 0 2px; background: #777; }

.combo {
  position: relative;
  display: flex;
  align-items: center;
  flex: none;
  height: 16px;
  border: 1px solid #d8d8d8;
  background: #cde8cf;
}
.combo::after {
  content: "";
  position: absolute;
  top: 0;
  right: 0;
  width: 12px;
  height: 14px;
  background: linear-gradient(#222, #222) 3px 6px / 6px 1px no-repeat, linear-gradient(#222, #222) 4px 7px / 4px 1px no-repeat, linear-gradient(#222, #222) 5px 8px / 2px 1px no-repeat, #fff;
  pointer-events: none;
}
.combo.dim { border-color: #a8a8a8; }
.combo.dim::after { background: linear-gradient(#aaa, #aaa) 3px 6px / 6px 1px no-repeat, linear-gradient(#aaa, #aaa) 4px 7px / 4px 1px no-repeat, linear-gradient(#aaa, #aaa) 5px 8px / 2px 1px no-repeat, #fff; }
.combo select {
  flex: 1;
  min-width: 0;
  height: 14px;
  padding: 0 2px;
  border: 0;
  appearance: none;
  background: none;
  font: 8px/12px "Liberation Mono", "Noto Sans CJK SC", monospace;
  color: #111;
}
.combo.style { width: 74px; }
.combo.cut { width: 26px; overflow: hidden; border-right: 0; }
.combo.cut::after { display: none; }
.combo.space { width: 127px; }
.combo.space select { padding-left: 5px; }
.combo.layer { flex: 1; padding-left: 1px; }
.combo.color { width: 110px; }
.combo.ltype { width: 118px; }
.combo.weight { width: 18px; }
.swatch { flex: none; width: 8px; height: 8px; margin-left: 3px; border: 1px solid #300; background: #e00; }
.stroke { flex: none; width: 44px; height: 1px; margin: 0 2px; background: #333; }
.weight .stroke { height: 3px; background: #000; }

.workspace {
  display: grid;
  grid-template-columns: 20px 1fr;
  grid-template-rows: 1fr 12px;
  flex: 1;
  min-height: 0;
}
.draw { grid-row: 1 / 3; background: #f0f0f0; border-right: 2px solid #8c8c8c; }
.palette {
  display: flex;
  flex-direction: column;
  padding: 2px 0 4px;
  border-right: 1px solid #c4c4c4;
  border-bottom: 1px solid #b4b4b4;
}
.grip-h { height: 4px; margin: 0 2px 2px; border: 1px solid #c4c4c4; border-width: 1px 0; }
.drawing { min-height: 0; overflow: hidden; background: #c0c0c0; border-top: 1px solid #888; }
.model { display: block; width: 100%; height: 100%; }

.tabs {
  display: flex;
  align-items: flex-start;
  background: #f0f0f0;
  border-top: 2px solid #333;
}
.tabs button { width: 14px; height: 10px; border-right: 1px solid #bbb; line-height: 8px; }
.tabs .current { width: 27px; background: #000; color: #fff; }
.tabs .layout { width: 27px; border: 0; }
.tabs i { width: 3px; line-height: 8px; }
```
